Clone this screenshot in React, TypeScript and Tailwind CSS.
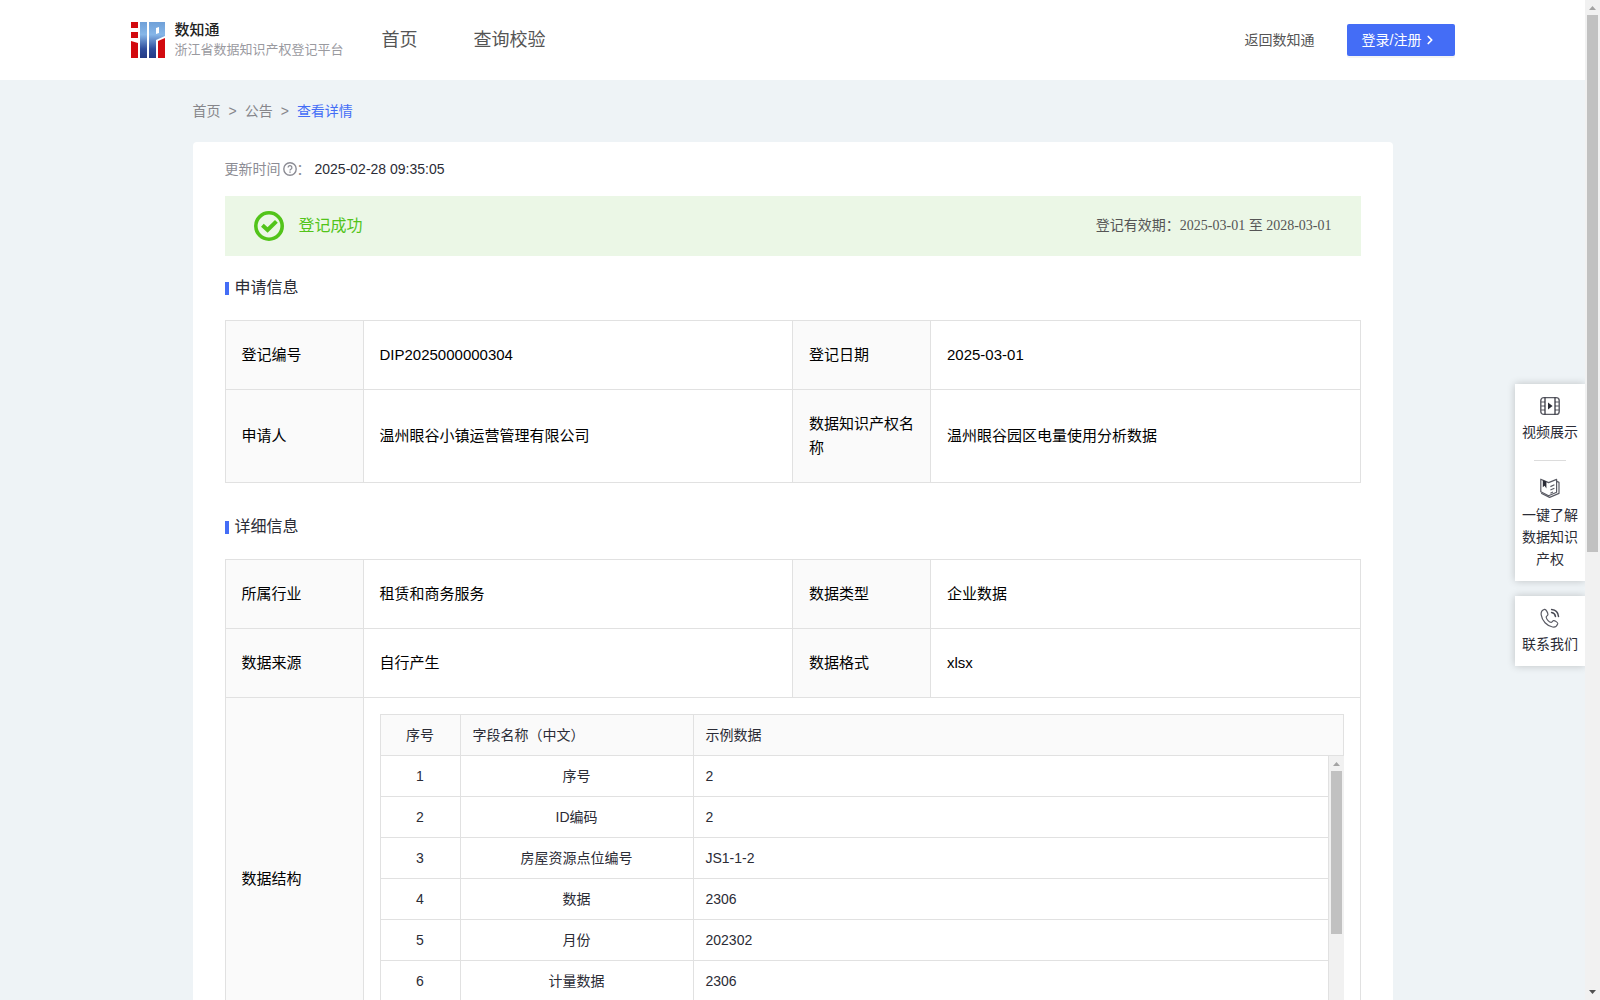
import React from "react";
import { ChevronRight } from "lucide-react";

const fields = [
  { name: "序号", sample: "2" },
  { name: "ID编码", sample: "2" },
  { name: "房屋资源点位编号", sample: "JS1-1-2" },
  { name: "数据", sample: "2306" },
  { name: "月份", sample: "202302" },
  { name: "计量数据", sample: "2306" },
  { name: "计量单位", sample: "kWh" },
];

function Logo() {
  return (
    <svg width="34" height="36" viewBox="0 0 34 36" aria-hidden="true">
      <defs>
        <linearGradient id="logoBlue" x1="0" y1="0" x2="0" y2="1">
          <stop offset="0" stopColor="#6fa0d8" />
          <stop offset="0.35" stopColor="#86b6e8" />
          <stop offset="0.75" stopColor="#2f4d9c" />
          <stop offset="1" stopColor="#243a85" />
        </linearGradient>
      </defs>
      <path fill="#d20a0f" d="M0 0h7v6H0zM0 10h7v6H0zM0 19l7 2v15H0zM27 19l7-3v20h-7z" />
      <path
        fill="url(#logoBlue)"
        fillRule="evenodd"
        d="M9 0h7v36H9zM18 0h16v14l-9 4v18h-7zM25 6v6l3-1V5z"
      />
    </svg>
  );
}

function HelpIcon() {
  return (
    <svg width="14" height="14" viewBox="0 0 14 14" fill="none" stroke="#8c8c94" aria-hidden="true">
      <circle cx="7" cy="7" r="6.2" strokeWidth="1.4" />
      <path d="M5.1 5.6a1.9 1.9 0 1 1 2.7 1.7c-.6.3-.8.6-.8 1.2" strokeWidth="1.3" />
      <path d="M7 9.5v1.2" strokeWidth="1.4" />
    </svg>
  );
}

function SuccessIcon() {
  return (
    <svg width="30" height="30" viewBox="0 0 30 30" fill="none" stroke="#52c41a" aria-hidden="true">
      <circle cx="15" cy="15" r="13.2" strokeWidth="3.6" />
      <path d="M8.4 14.2l5.2 4.8 8.8-8.6" strokeWidth="4" />
    </svg>
  );
}

function VideoIcon() {
  return (
    <svg width="20" height="20" viewBox="0 0 20 20" fill="none" stroke="#5a5b64" aria-hidden="true">
      <rect x=".8" y="1.600" width="18.4" height="16.800" rx="3" strokeWidth="1.4" />
      <path d="M1 6h4M1 10h4M1 14h4M15 6h4M15 10h4M15 14h4" strokeWidth="1.2" />
      <path d="M5 1.600v16.800M15 1.600v16.800" stroke="#2b2c36" strokeWidth="1.2" />
      <path d="M8 6.600v6.800l4.600-3.400z" fill="#2b2c36" stroke="none" />
    </svg>
  );
}

function BookIcon() {
  return (
    <svg width="20" height="20" viewBox="0 0 20 20" fill="none" stroke="#5a5b64" strokeWidth="1.200" strokeLinejoin="round" aria-hidden="true">
      <path d="M8.600 4.600L.8 1.200v12.600l7.800 4 8-3.600V1.400z" />
      <path d="M16.800 3.400l2.200 1v11l-9.400 4-8.400-4.200" />
      <path d="M10.400 8.600l4-1.800M10.400 12l4-1.800M10.400 15.200l2.600-1.200" />
      <path d="M2.800 2v7.200l1.800-1.400 1.800 2.800V3.600z" fill="#2b2c36" stroke="none" />
    </svg>
  );
}

function PhoneIcon() {
  return (
    <svg width="20" height="20" viewBox="0 0 20 20" fill="none" stroke="#5a5b64" strokeWidth="1.200" strokeLinecap="round" strokeLinejoin="round" aria-hidden="true">
      <path d="M4.600 1.400C2.400 2 .8 4 1.200 6.800c.9 6 5.600 11.200 11.400 12.200 2.300.4 4.400-1 5.100-3.100.4-1.400-2.900-3.600-4.400-3.200-1 .3-1.200 1.700-2.200 1.700-1.800 0-4.700-3.200-4.900-5.200-.1-1.100 1.600-1.400 1.700-2.500.2-1.500-1.900-5.700-3.300-5.300z" />
      <path d="M11.600 4.600c2.200.4 3.500 1.700 3.900 3.900M11.600 1.600c3.900.3 6.500 2.900 6.900 6.900" stroke="#4a4b55" strokeWidth="1.500" />
    </svg>
  );
}

// Scrollbar column, sized by its parent
function ScrollTrack({ thumb }: { thumb: string }) {
  return (
    <div aria-hidden="true" className="flex w-[15px] shrink-0 flex-col items-center bg-[#f1f1f1]">
      <svg width="15" height="15" viewBox="0 0 15 15" className="shrink-0">
        <path d="M7.500 6L11 10H4z" fill="#a3a3a3" />
      </svg>
      <div className={`w-[11px] shrink-0 bg-[#c1c1c1] ${thumb}`} />
      <svg width="15" height="15" viewBox="0 0 15 15" className="mt-auto shrink-0">
        <path d="M4 5h7L7.500 9z" fill="#505050" />
      </svg>
    </div>
  );
}

function SectionTitle({ children }: { children: React.ReactNode }) {
  return (
    <h2 className="flex items-center gap-[6px] text-base leading-6 text-[#2b2c36]">
      <span className="mt-px h-[13px] w-1 bg-[#446df6]" />
      {children}
    </h2>
  );
}

const border = "border border-[#e1e1e1]";

function LabelCell({ children }: { children: React.ReactNode }) {
  return (
    <th scope="row" className={`${border} bg-[#fafafa] px-4 py-[22px] text-left font-normal`}>
      {children}
    </th>
  );
}

function ValueCell({ children }: { children: React.ReactNode }) {
  return <td className={`${border} px-4 py-[22px]`}>{children}</td>;
}

function InfoTable({ children }: { children: React.ReactNode }) {
  return (
    <table className="mt-5 w-full table-fixed border-collapse text-[15px] leading-6 text-black">
      <colgroup>
        <col className="w-[138px]" />
        <col />
        <col className="w-[138px]" />
        <col />
      </colgroup>
      <tbody>{children}</tbody>
    </table>
  );
}

function FieldCols() {
  return (
    <colgroup>
      <col className="w-[80px]" />
      <col className="w-[233px]" />
      <col />
    </colgroup>
  );
}

function FieldTable() {
  return (
    <div className="text-sm leading-6 text-[#2b2c36]">
      <table className="w-full table-fixed border-collapse">
        <FieldCols />
        <thead>
          <tr className="bg-[#fafafa]">
            <th className={`${border} px-3 py-2 font-normal`}>序号</th>
            <th className={`${border} px-3 py-2 text-left font-normal`}>字段名称（中文）</th>
            <th className={`${border} px-3 py-2 text-left font-normal`}>示例数据</th>
          </tr>
        </thead>
      </table>
      <div className="flex h-[287px] overflow-hidden">
        <div className="min-w-0 flex-1">
          <table className="w-full table-fixed border-collapse">
            <FieldCols />
            <tbody>
              {fields.map((field, index) => (
                <tr key={field.name}>
                  <td className="border border-t-0 border-[#e1e1e1] px-3 py-2 text-center">{index + 1}</td>
                  <td className="border border-t-0 border-[#e1e1e1] px-3 py-2 text-center">{field.name}</td>
                  <td className="border border-t-0 border-[#e1e1e1] px-3 py-2">{field.sample}</td>
                </tr>
              ))}
            </tbody>
          </table>
        </div>
        <ScrollTrack thumb="h-[163px]" />
      </div>
    </div>
  );
}

function Header() {
  return (
    <header className="bg-white">
      <div className="mx-auto flex h-20 max-w-[1324px] items-center">
        <a href="#" className="flex items-center gap-[10px]">
          <Logo />
          <span className="flex flex-col">
            <span className="text-[15px] leading-5 font-medium text-[#222]">数知通</span>
            <span className="text-[13px] leading-5 text-[#9a9a9f]">浙江省数据知识产权登记平台</span>
          </span>
        </a>
        <nav className="ml-[38px] flex gap-14 text-lg leading-6 text-[#555]">
          <a href="#">首页</a>
          <a href="#">查询校验</a>
        </nav>
        <div className="ml-auto flex items-center gap-8 text-sm">
          <a href="#" className="text-[#555]">返回数知通</a>
          <button
            type="button"
            className="flex h-8 w-[108px] items-center gap-[2px] rounded-xs bg-[#446df6] pl-[15px] text-white shadow-[0_2px_0_rgba(0,0,0,0.045)]"
          >
            登录/注册
            <ChevronRight size={14} strokeWidth={3} />
          </button>
        </div>
      </div>
    </header>
  );
}

function SideTools() {
  return (
    <aside className="absolute top-[384px] right-0 flex w-[70px] flex-col gap-[15px] text-sm leading-[22px] text-[#2b2c36]">
      <div className="flex flex-col items-center bg-white pt-3 pb-[11px] shadow-[0_0_8px_rgba(0,0,0,0.2)]">
        <button type="button" className="flex flex-col items-center gap-[5px]">
          <VideoIcon />
          视频展示
        </button>
        <div className="my-[17px] h-px w-8 bg-[#dcdcdc]" />
        <button type="button" className="flex w-14 flex-col items-center gap-[6px]">
          <BookIcon />
          一键了解数据知识产权
        </button>
      </div>
      <div className="flex flex-col items-center bg-white pt-3 pb-[11px] shadow-[0_0_8px_rgba(0,0,0,0.2)]">
        <button type="button" className="flex flex-col items-center gap-[5px]">
          <PhoneIcon />
          联系我们
        </button>
      </div>
    </aside>
  );
}

export default function App() {
  return (
    <div className="flex h-screen overflow-hidden font-['Liberation_Sans','Noto_Sans_CJK_SC',sans-serif]">
      <div className="relative min-w-0 flex-1 overflow-hidden bg-[#eef3f6]">
        <Header />

        <main className="mx-auto max-w-[1200px]">
          <nav className="flex gap-2 pt-5 pb-5 text-sm leading-[22px] text-[#86868b]">
            <a href="#">首页</a>
            <span>&gt;</span>
            <a href="#">公告</a>
            <span>&gt;</span>
            <a href="#" className="text-[#446df6]">查看详情</a>
          </nav>

          <div className="rounded-t bg-white px-8 pt-4 pb-8">
            <div className="flex items-center text-sm leading-[22px] text-[#8c8c94]">
              <span className="mr-[2px]">更新时间</span>
              <HelpIcon />
              <span>：</span>
              <span className="ml-1 text-[#2b2c36]">2025-02-28 09:35:05</span>
            </div>

            {/* Registration status */}
            <div className="mt-4 flex h-[60px] items-center bg-[#ebf7e6] pr-[29px] pl-[29px]">
              <SuccessIcon />
              <span className="ml-[15px] text-base text-[#52c41a]">登记成功</span>
              <span className="ml-auto font-['Liberation_Serif','Noto_Sans_CJK_SC',serif] text-sm text-[#555]">
                登记有效期：2025-03-01 至 2028-03-01
              </span>
            </div>

            <section className="mt-5">
              <SectionTitle>申请信息</SectionTitle>
              <InfoTable>
                <tr>
                  <LabelCell>登记编号</LabelCell>
                  <ValueCell>DIP2025000000304</ValueCell>
                  <LabelCell>登记日期</LabelCell>
                  <ValueCell>2025-03-01</ValueCell>
                </tr>
                <tr>
                  <LabelCell>申请人</LabelCell>
                  <ValueCell>温州眼谷小镇运营管理有限公司</ValueCell>
                  <LabelCell>数据知识产权名称</LabelCell>
                  <ValueCell>温州眼谷园区电量使用分析数据</ValueCell>
                </tr>
              </InfoTable>
            </section>

            <section className="mt-8">
              <SectionTitle>详细信息</SectionTitle>
              <InfoTable>
                <tr>
                  <LabelCell>所属行业</LabelCell>
                  <ValueCell>租赁和商务服务</ValueCell>
                  <LabelCell>数据类型</LabelCell>
                  <ValueCell>企业数据</ValueCell>
                </tr>
                <tr>
                  <LabelCell>数据来源</LabelCell>
                  <ValueCell>自行产生</ValueCell>
                  <LabelCell>数据格式</LabelCell>
                  <ValueCell>xlsx</ValueCell>
                </tr>
                <tr>
                  <LabelCell>数据结构</LabelCell>
                  <td colSpan={3} className={`${border} p-4`}>
                    <FieldTable />
                  </td>
                </tr>
              </InfoTable>
            </section>
          </div>
        </main>

        <SideTools />
      </div>
      <ScrollTrack thumb="h-[537px]" />
    </div>
  );
}
